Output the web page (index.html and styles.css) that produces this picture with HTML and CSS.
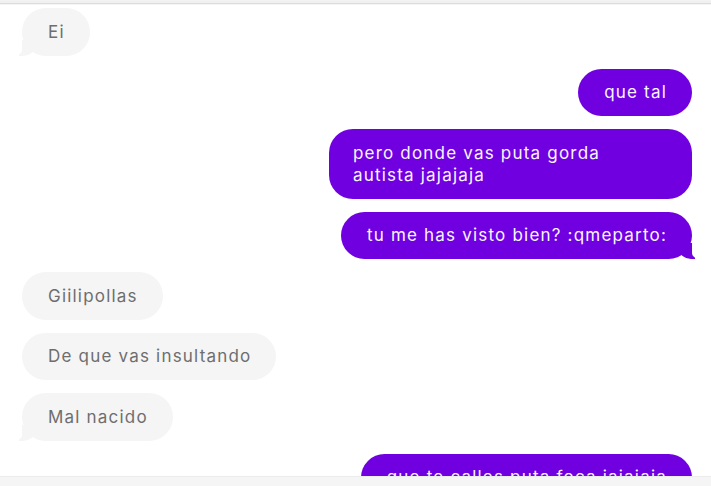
FILE: index.html
```
<!DOCTYPE html>
<html>

<head>
    <title>Chat</title>
    <link rel="stylesheet" href="styles.css">
</head>

<body>
    <div class="top-bar"></div>
    <div class="messages">
        <div class="msg in tail">Ei</div>
        <div class="msg out">que tal</div>
        <div class="msg out wide">pero donde vas puta gorda<br>autista jajajaja</div>
        <div class="msg out tail">tu me has visto bien? :qmeparto:</div>
        <div class="msg in">Giilipollas</div>
        <div class="msg in">De que vas insultando</div>
        <div class="msg in tail">Mal nacido</div>
        <div class="msg out">que te calles puta foca jajajaja</div>
    </div>
    <div class="composer"></div>
</body>

</html>
```

FILE: styles.css
```
body {
    margin: 0;
    background-color: #ffffff;
    font-family: 'Inter', sans-serif;
    height: 486px;
    overflow: hidden;
    position: relative;
}

.top-bar {
    height: 2px;
    background-color: #f0f0f0;
    border-bottom: 1px solid #dcdcdc;
    border-top: 1px solid #f3f3f3;
    margin-bottom: 2px;
    box-shadow: 0 1px 0 #f5f5f5;
}

.messages {
    display: flex;
    flex-direction: column;
    gap: 13px;
    padding: 2px 19px 0 22px;
}

.msg {
    position: relative;
    font-size: 17px;
    letter-spacing: 1.2px;
    line-height: 22px;
    padding: 12.75px 25px 12.75px 26px;
    border-radius: 24px;
}

.in {
    align-self: flex-start;
    background-color: #f5f5f5;
    color: #6e6e6e;
}

.out {
    align-self: flex-end;
    background-color: #7000e0;
    color: #f8f4ff;
}

/* wrapped bubble keeps its max width */
.wide {
    padding-left: 24px;
    padding-right: 92px;
}

/* little tail on the last bubble of a group */
.tail::before {
    content: "";
    position: absolute;
    bottom: 0;
    width: 16px;
    height: 16px;
    background-color: inherit;
}

.tail::after {
    content: "";
    position: absolute;
    bottom: 0;
    width: 8px;
    height: 16px;
    background-color: #ffffff;
}

.in.tail::before {
    left: -3px;
    border-bottom-right-radius: 12px 10px;
}

.in.tail::after {
    left: -8px;
    border-bottom-right-radius: 8px 6px;
}

.out.tail::before {
    right: -3px;
    border-bottom-left-radius: 12px 10px;
}

.out.tail::after {
    right: -8px;
    border-bottom-left-radius: 8px 6px;
}

.composer {
    position: absolute;
    left: 0;
    right: 0;
    bottom: 0;
    height: 9px;
    background-color: #f5f5f5;
    border-top: 1px solid #ececec;
}
```
